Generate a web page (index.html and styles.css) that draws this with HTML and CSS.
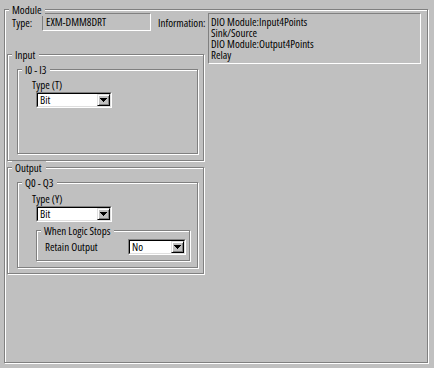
FILE: index.html
```html
<!DOCTYPE html>
<html>
<head>
<meta charset="utf-8">
<link rel="stylesheet" href="styles.css">
</head>
<body>
<div class="frame">
  <div class="group module">
    <span class="legend">Module</span>
    <div class="module-grid">
      <div class="top-row">
        <span class="type-lbl">Type:</span>
        <div class="static type-box">EXM-DMM8DRT</div>
        <span class="info-lbl">Information:</span>
      </div>
      <div class="static info-box">DIO Module:Input4Points<br>Sink/Source<br>DIO Module:Output4Points<br>Relay</div>
      <div class="group io io-input">
        <span class="legend">Input</span>
        <div class="group sub sub-i">
          <span class="legend">I0 - I3</span>
          <div class="field-lbl">Type (T)</div>
          <div class="combo combo-type">
            <div class="combo-inner">
              <span class="combo-text">Bit</span>
              <span class="combo-btn"><svg width="7" height="4" viewBox="0 0 7 4" shape-rendering="crispEdges"><rect x="0" y="0" width="7" height="1"/><rect x="1" y="1" width="5" height="1"/><rect x="2" y="2" width="3" height="1"/><rect x="3" y="3" width="1" height="1"/></svg></span>
            </div>
          </div>
        </div>
      </div>
      <div class="group io io-output">
        <span class="legend">Output</span>
        <div class="group sub sub-q">
          <span class="legend">Q0 - Q3</span>
          <div class="field-lbl">Type (Y)</div>
          <div class="combo combo-type">
            <div class="combo-inner">
              <span class="combo-text">Bit</span>
              <span class="combo-btn"><svg width="7" height="4" viewBox="0 0 7 4" shape-rendering="crispEdges"><rect x="0" y="0" width="7" height="1"/><rect x="1" y="1" width="5" height="1"/><rect x="2" y="2" width="3" height="1"/><rect x="3" y="3" width="1" height="1"/></svg></span>
            </div>
          </div>
          <div class="group logic">
            <span class="legend">When Logic Stops</span>
            <span class="retain-lbl">Retain Output</span>
            <div class="combo combo-retain">
              <div class="combo-inner">
                <span class="combo-text">No</span>
                <span class="combo-btn"><svg width="7" height="4" viewBox="0 0 7 4" shape-rendering="crispEdges"><rect x="0" y="0" width="7" height="1"/><rect x="1" y="1" width="5" height="1"/><rect x="2" y="2" width="3" height="1"/><rect x="3" y="3" width="1" height="1"/></svg></span>
              </div>
            </div>
          </div>
        </div>
      </div>
    </div>
  </div>
</div>
</body>
</html>
```
FILE: styles.css
```css
* { box-sizing: border-box; }
html, body { margin: 0; padding: 0; }
body {
  background: #c0c0c0;
  color: #000;
  font-family: "Open Sans", "Liberation Sans", Arial, sans-serif;
  font-stretch: 85%;
  font-size: 11px;
  line-height: 13px;
  width: 434px;
  height: 368px;
  overflow: hidden;
}
.frame { padding: 9px 0 0 4px; }

.group {
  position: relative;
  border: 1px solid #808080;
  box-shadow: inset 1px 1px 0 #fff, 1px 1px 0 #fff;
}
.legend {
  position: absolute;
  top: -7px;
  left: 4px;
  padding: 0 4px 0 3px;
  background: #c0c0c0;
  line-height: 13px;
  white-space: nowrap;
}

.module { width: 424px; height: 354px; }
.module-grid {
  display: grid;
  grid-template-columns: 197px 213px;
  column-gap: 4px;
  padding: 3px 0 0 2px;
  align-items: start;
}
.top-row {
  grid-column: 1;
  grid-row: 1;
  display: flex;
  align-items: center;
  white-space: nowrap;
}
.top-row > * { flex-shrink: 0; }
.type-lbl { width: 30px; margin-left: 5px; }
.info-lbl { margin-left: 7px; }

.static {
  border: 1px solid;
  border-color: #808080 #fff #fff #808080;
}
.type-box { width: 109px; height: 18px; padding: 0 3px; line-height: 16px; }
.info-box {
  grid-column: 2;
  grid-row: 1 / span 3;
  width: 213px;
  height: 51px;
  padding: 2px 2px;
  line-height: 11px;
  white-space: nowrap;
}

.io { grid-column: 1; width: 197px; height: 107px; padding: 14px 0 0 9px; }
.io-input { grid-row: 2; margin-top: 23px; }
.io-output { grid-row: 3; margin-top: 6px; }

.sub { width: 181px; padding: 8px 0 0 14px; }
.sub-i { height: 85px; }
.sub-q { height: 86px; padding-top: 9px; }
.field-lbl { line-height: 13px; }

.combo {
  height: 16px;
  border: 1px solid;
  border-color: #808080 #fff #fff #808080;
  display: flex;
}
.combo-type { width: 76px; margin: 1px 0 0 4px; }
.combo-retain { width: 58px; flex-shrink: 0; }
.combo-inner {
  flex: 1;
  display: flex;
  border: 1px solid;
  border-color: #000 #dfdfdf #dfdfdf #000;
  background: #fff;
}
.combo-text { flex: 1; padding-left: 2px; line-height: 12px; }
.combo-btn {
  width: 13px;
  border: 1px solid;
  border-color: #dfdfdf #000 #000 #dfdfdf;
  box-shadow: inset 1px 1px 0 #fff, inset -1px -1px 0 #808080;
  background: #c0c0c0;
  display: flex;
  align-items: center;
  justify-content: center;
}
.combo-btn svg { display: block; fill: #000; }

.logic {
  width: 154px;
  height: 31px;
  margin: 8px 0 0 4px;
  padding: 8px 0 0 8px;
  display: flex;
  align-items: flex-start;
}
.retain-lbl { width: 83px; flex-shrink: 0; line-height: 16px; white-space: nowrap; }
```
